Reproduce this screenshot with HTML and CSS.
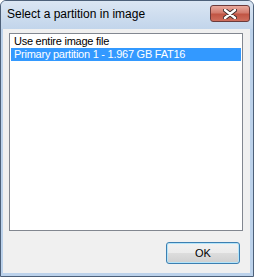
FILE: index.html
```html
<!DOCTYPE html>
<html>
<head>
<meta charset="utf-8">
<link rel="stylesheet" href="styles.css">
</head>
<body>
<div class="window">
  <div class="titlebar">
    <span class="title">Select a partition in image</span>
    <div class="close">
      <svg width="14" height="10" viewBox="0 0 14 10">
        <path d="M2 1 L12 9 M12 1 L2 9" stroke="#3b2a2a" stroke-width="4.2" stroke-linecap="round"/>
        <path d="M2 1 L12 9 M12 1 L2 9" stroke="#ffffff" stroke-width="2.4" stroke-linecap="round"/>
      </svg>
    </div>
  </div>
  <div class="client">
    <div class="listbox">
      <div class="row">Use entire image file</div>
      <div class="row selected">Primary partition 1 - 1.967 GB FAT16</div>
    </div>
    <div class="buttons">
      <button class="btn">OK</button>
    </div>
  </div>
</div>
</body>
</html>
```
FILE: styles.css
```css
html, body {
  margin: 0;
  padding: 0;
  background: #ffffff;
}
.window {
  width: 254px;
  height: 277px;
  box-sizing: border-box;
  border: 1px solid #4d6079;
  border-radius: 6px 6px 0 0;
  background: #bcd2eb;
  display: flex;
  flex-direction: column;
}
.titlebar {
  height: 28px;
  flex: none;
  display: flex;
  align-items: center;
  justify-content: space-between;
  padding: 0 3px 0 6px;
  background: linear-gradient(#dbe6f3, #c2d5eb);
  border-radius: 5px 5px 0 0;
}
.title {
  font-family: "Liberation Sans", sans-serif;
  font-size: 12px;
  color: #000;
  margin-top: -2px;
}
.close {
  width: 40px;
  height: 17px;
  box-sizing: border-box;
  border: 1px solid #6b3b3b;
  border-radius: 3px;
  background: linear-gradient(#e9a99c, #d37c6e 45%, #c15544 55%, #cf6e5d);
  display: flex;
  align-items: center;
  justify-content: center;
  margin-top: -3px;
}
.client {
  flex: 1;
  margin: 0 3px 3px 2px;
  background: #f0f0f0;
  display: flex;
  flex-direction: column;
  padding: 4px 7px 9px 6px;
}
.listbox {
  height: 198px;
  box-sizing: border-box;
  border: 1px solid #828790;
  background: #fff;
  padding: 1px;
  font-family: "Liberation Sans", sans-serif;
  font-size: 11px;
  letter-spacing: -0.25px;
}
.row {
  height: 13px;
  line-height: 13px;
  padding-left: 3px;
  white-space: nowrap;
  color: #000;
}
.row.selected {
  background: #3399ff;
  color: #fff;
}
.buttons {
  flex: 1;
  display: flex;
  justify-content: flex-end;
  align-items: flex-end;
}
.btn {
  width: 74px;
  height: 22px;
  margin-right: 3px;
  box-sizing: border-box;
  border: 1px solid #3c7fb1;
  border-radius: 3px;
  background: linear-gradient(#f2f2f2, #ebebeb 50%, #dddddd 50%, #cfcfcf);
  box-shadow: inset 0 0 0 1px #b4e4f9;
  font-family: "Liberation Sans", sans-serif;
  font-size: 11px;
  color: #000;
  padding: 0;
}
```
